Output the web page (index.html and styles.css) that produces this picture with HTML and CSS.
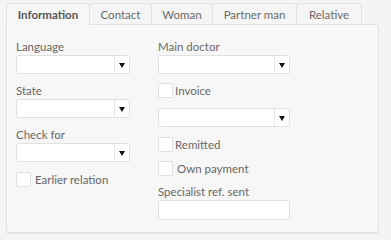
FILE: index.html
```html
<!DOCTYPE html>
<html>
<head>
<meta charset="utf-8">
<link rel="stylesheet" href="styles.css">
</head>
<body>
<div class="tabs">
  <div class="tab active w-info">Information</div>
  <div class="tab w-contact">Contact</div>
  <div class="tab w-woman">Woman</div>
  <div class="tab w-partner">Partner man</div>
  <div class="tab w-relative">Relative</div>
</div>
<div class="panel">
  <div class="col col-left">
    <div class="field">
      <label class="lbl">Language</label>
      <div class="select"><span class="val"></span><span class="arrow"></span></div>
    </div>
    <div class="field">
      <label class="lbl">State</label>
      <div class="select"><span class="val"></span><span class="arrow"></span></div>
    </div>
    <div class="field">
      <label class="lbl">Check for</label>
      <div class="select"><span class="val"></span><span class="arrow"></span></div>
    </div>
    <div class="check"><span class="box"></span><span class="ctext">Earlier relation</span></div>
  </div>
  <div class="col col-right">
    <div class="field">
      <label class="lbl">Main doctor</label>
      <div class="select"><span class="val"></span><span class="arrow"></span></div>
    </div>
    <div class="check"><span class="box"></span><span class="ctext tight">Invoice</span></div>
    <div class="select spaced"><span class="val"></span><span class="arrow"></span></div>
    <div class="check spaced"><span class="box"></span><span class="ctext tight">Remitted</span></div>
    <div class="check"><span class="box"></span><span class="ctext">Own payment</span></div>
    <div class="field">
      <label class="lbl">Specialist ref. sent</label>
      <div class="input"></div>
    </div>
  </div>
</div>
</body>
</html>
```
FILE: styles.css
```css
html, body {
  margin: 0;
  padding: 0;
  background: #f4f4f4;
}
body {
  font-family: "Lato", "Open Sans", sans-serif;
  font-size: 11.5px;
  color: #686868;
  width: 391px;
  height: 240px;
  overflow: hidden;
}
.tabs {
  display: flex;
  padding: 3px 0 0 6px;
  height: 21px;
  box-sizing: content-box;
}
.tab {
  box-sizing: border-box;
  height: 21px;
  border: 1px solid #e2e2e2;
  border-bottom: none;
  border-radius: 3px 3px 0 0;
  background: #f5f5f5;
  display: flex;
  align-items: center;
  justify-content: center;
  margin-right: -1px;
  color: #6a6a6a;
}
.tab.active {
  height: 22px;
  background: #f7f7f7;
  font-weight: bold;
  color: #555;
  position: relative;
  z-index: 1;
}
.w-info { width: 84px; }
.w-contact { width: 63px; }
.w-woman { width: 62px; }
.w-partner { width: 85px; }
.w-relative { width: 66px; }

.panel {
  margin: 0 12px 0 6px;
  height: 209px;
  box-sizing: border-box;
  border: 1px solid #e2e2e2;
  border-radius: 0 3px 3px 3px;
  background: #f7f7f7;
  box-shadow: 0 1px 1px rgba(0,0,0,0.06);
  display: flex;
  padding: 15px 0 0 9px;
  gap: 28px;
}
.col {
  display: flex;
  flex-direction: column;
}
.col-left { width: 114px; gap: 10px; }
.col-right { width: 132px; gap: 9px; }
.spaced { margin-top: 1px; }
.field {
  display: flex;
  flex-direction: column;
  gap: 1px;
}
.lbl {
  line-height: 14px;
  height: 14px;
}
.select {
  height: 19px;
  box-sizing: border-box;
  border: 1px solid #e0e0e0;
  border-radius: 3px;
  background: #fff;
  display: flex;
}
.select .val { flex: 1; }
.select .arrow {
  width: 14px;
  border-left: 1px solid #e6e6e6;
  display: flex;
  align-items: center;
  justify-content: center;
}
.select .arrow::after {
  content: "";
  border-left: 3px solid transparent;
  border-right: 3px solid transparent;
  border-top: 5px solid #111;
  margin-top: 1px;
}
.input {
  height: 20px;
  box-sizing: border-box;
  border: 1px solid #e0e0e0;
  border-radius: 3px;
  background: #fff;
}
.check {
  display: flex;
  align-items: center;
  height: 15px;
}
.box {
  width: 15px;
  height: 15px;
  box-sizing: border-box;
  border: 1px solid #e0e0e0;
  border-radius: 2px;
  background: #fff;
  flex: none;
}
.ctext { margin-left: 4px; line-height: 15px; }
.ctext.tight { margin-left: 2px; }
```
